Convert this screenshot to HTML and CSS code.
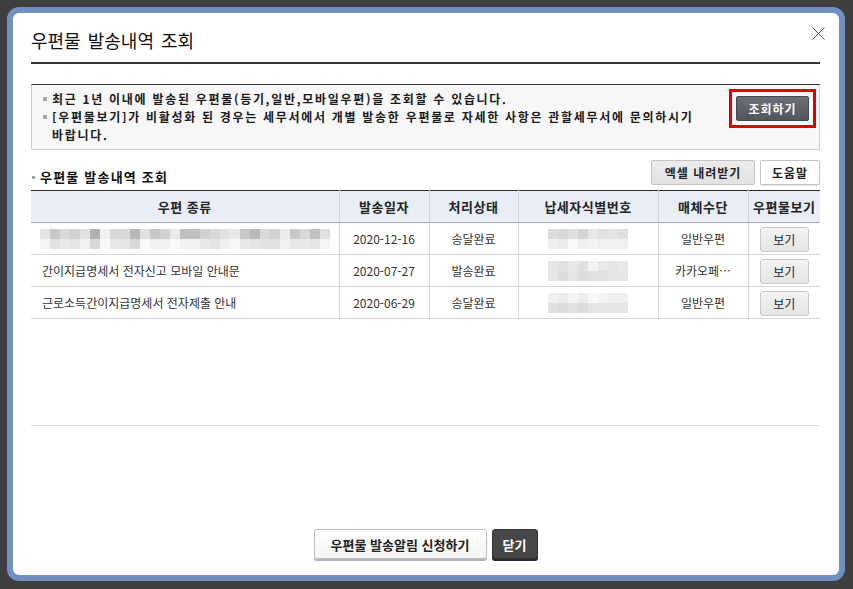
FILE: index.html
```html
<!DOCTYPE html>
<html lang="ko">
<head>
<meta charset="utf-8">
<title>우편물 발송내역 조회</title>
<link rel="stylesheet" href="styles.css">
</head>
<body>
<div class="backdrop">
  <div class="modal">
    <button class="close" aria-label="닫기">
      <svg width="13" height="13" viewBox="0 0 13 13"><path d="M0.5 0.5L12.5 12.5M12.5 0.5L0.5 12.5" stroke="#555" stroke-width="1" fill="none"/></svg>
    </button>
    <h1 class="title">우편물 발송내역 조회</h1>

    <div class="info">
      <ul class="info-list">
        <li>최근 1년 이내에 발송된 우편물(등기,일반,모바일우편)을 조회할 수 있습니다.</li>
        <li>[우편물보기]가 비활성화 된 경우는 세무서에서 개별 발송한 우편물로 자세한 사항은 관할세무서에 문의하시기<br>바랍니다.</li>
      </ul>
      <span class="search-mark"><button class="btn-search">조회하기</button></span>
    </div>

    <div class="toolbar">
      <h2 class="sub-title">우편물 발송내역 조회</h2>
      <div class="tools">
        <button class="btn-excel">엑셀 내려받기</button>
        <button class="btn-help">도움말</button>
      </div>
    </div>

    <div class="results">
      <table class="grid">
        <colgroup>
          <col class="c1"><col class="c2"><col class="c3"><col class="c4"><col class="c5"><col class="c6">
        </colgroup>
        <thead>
          <tr><th>우편 종류</th><th>발송일자</th><th>처리상태</th><th>납세자식별번호</th><th>매체수단</th><th>우편물보기</th></tr>
        </thead>
        <tbody>
          <tr>
            <td class="left">
              <svg class="mosaic" width="290" height="20" viewBox="0 0 290 20" shape-rendering="crispEdges">
                <rect x="0" y="0" width="10" height="10" fill="#e3e3e3"/><rect x="10" y="0" width="10" height="10" fill="#c8c8c8"/><rect x="20" y="0" width="10" height="10" fill="#d8d8d8"/><rect x="30" y="0" width="10" height="10" fill="#d0d0d0"/><rect x="40" y="0" width="10" height="10" fill="#e0e0e0"/><rect x="50" y="0" width="10" height="10" fill="#b0b0b0"/><rect x="60" y="0" width="10" height="10" fill="#f0f0f0"/><rect x="70" y="0" width="10" height="10" fill="#d8d8d8"/><rect x="80" y="0" width="10" height="10" fill="#d8d8d8"/><rect x="90" y="0" width="10" height="10" fill="#b8b8b8"/><rect x="100" y="0" width="10" height="10" fill="#e0e0e0"/><rect x="110" y="0" width="10" height="10" fill="#c8c8c8"/><rect x="120" y="0" width="10" height="10" fill="#d0d0d0"/><rect x="130" y="0" width="10" height="10" fill="#e8e8e8"/><rect x="140" y="0" width="10" height="10" fill="#c0c0c0"/><rect x="150" y="0" width="10" height="10" fill="#c0c0c0"/><rect x="160" y="0" width="10" height="10" fill="#d0d0d0"/><rect x="170" y="0" width="10" height="10" fill="#d8d8d8"/><rect x="180" y="0" width="10" height="10" fill="#e0e0e0"/><rect x="190" y="0" width="10" height="10" fill="#e8e8e8"/><rect x="200" y="0" width="10" height="10" fill="#c8c8c8"/><rect x="210" y="0" width="10" height="10" fill="#b8b8b8"/><rect x="220" y="0" width="10" height="10" fill="#d8d8d8"/><rect x="230" y="0" width="10" height="10" fill="#d0d0d0"/><rect x="240" y="0" width="10" height="10" fill="#ececec"/><rect x="250" y="0" width="10" height="10" fill="#c8c8c8"/><rect x="260" y="0" width="10" height="10" fill="#d8d8d8"/><rect x="270" y="0" width="10" height="10" fill="#c0c0c0"/><rect x="280" y="0" width="10" height="10" fill="#e0e0e0"/>
                <rect x="0" y="10" width="10" height="10" fill="#f4f4f4"/><rect x="10" y="10" width="10" height="10" fill="#e0e0e0"/><rect x="20" y="10" width="10" height="10" fill="#e8e8e8"/><rect x="30" y="10" width="10" height="10" fill="#e4e4e4"/><rect x="40" y="10" width="10" height="10" fill="#f0f0f0"/><rect x="50" y="10" width="10" height="10" fill="#d8d8d8"/><rect x="60" y="10" width="10" height="10" fill="#f8f8f8"/><rect x="70" y="10" width="10" height="10" fill="#e8e8e8"/><rect x="80" y="10" width="10" height="10" fill="#e4e4e4"/><rect x="90" y="10" width="10" height="10" fill="#d8d8d8"/><rect x="100" y="10" width="10" height="10" fill="#f8f8f8"/><rect x="110" y="10" width="10" height="10" fill="#f0f0f0"/><rect x="120" y="10" width="10" height="10" fill="#f0f0f0"/><rect x="130" y="10" width="10" height="10" fill="#f8f8f8"/><rect x="140" y="10" width="10" height="10" fill="#f0f0f0"/><rect x="150" y="10" width="10" height="10" fill="#f0f0f0"/><rect x="160" y="10" width="10" height="10" fill="#e8e8e8"/><rect x="170" y="10" width="10" height="10" fill="#e4e4e4"/><rect x="180" y="10" width="10" height="10" fill="#f0f0f0"/><rect x="190" y="10" width="10" height="10" fill="#f8f8f8"/><rect x="200" y="10" width="10" height="10" fill="#e8e8e8"/><rect x="210" y="10" width="10" height="10" fill="#e4e4e4"/><rect x="220" y="10" width="10" height="10" fill="#e0e0e0"/><rect x="230" y="10" width="10" height="10" fill="#e0e0e0"/><rect x="240" y="10" width="10" height="10" fill="#f0f0f0"/><rect x="250" y="10" width="10" height="10" fill="#e8e8e8"/><rect x="260" y="10" width="10" height="10" fill="#e8e8e8"/><rect x="270" y="10" width="10" height="10" fill="#e4e4e4"/><rect x="280" y="10" width="10" height="10" fill="#f4f4f4"/>
              </svg>
            </td>
            <td>2020-12-16</td>
            <td>송달완료</td>
            <td>
              <svg class="mosaic" width="80" height="20" viewBox="0 0 80 20" shape-rendering="crispEdges">
                <rect x="0" y="0" width="10" height="10" fill="#dcdcdc"/><rect x="10" y="0" width="10" height="10" fill="#d8d8d8"/><rect x="20" y="0" width="10" height="10" fill="#e0e0e0"/><rect x="30" y="0" width="10" height="10" fill="#d4d4d4"/><rect x="40" y="0" width="10" height="10" fill="#e8e8e8"/><rect x="50" y="0" width="10" height="10" fill="#e0e0e0"/><rect x="60" y="0" width="10" height="10" fill="#e4e4e4"/><rect x="70" y="0" width="10" height="10" fill="#e0e0e0"/>
                <rect x="0" y="10" width="10" height="10" fill="#f0f0f0"/><rect x="10" y="10" width="10" height="10" fill="#ececec"/><rect x="20" y="10" width="10" height="10" fill="#fafafa"/><rect x="30" y="10" width="10" height="10" fill="#f0f0f0"/><rect x="40" y="10" width="10" height="10" fill="#f4f4f4"/><rect x="50" y="10" width="10" height="10" fill="#f0f0f0"/><rect x="60" y="10" width="10" height="10" fill="#f0f0f0"/><rect x="70" y="10" width="10" height="10" fill="#f0f0f0"/>
              </svg>
            </td>
            <td>일반우편</td>
            <td><button class="btn-view">보기</button></td>
          </tr>
          <tr>
            <td class="left">간이지급명세서 전자신고 모바일 안내문</td>
            <td>2020-07-27</td>
            <td>발송완료</td>
            <td>
              <svg class="mosaic" width="80" height="20" viewBox="0 0 80 20" shape-rendering="crispEdges">
                <rect x="0" y="0" width="10" height="10" fill="#e4e4e4"/><rect x="10" y="0" width="10" height="10" fill="#e0e0e0"/><rect x="20" y="0" width="10" height="10" fill="#e8e8e8"/><rect x="30" y="0" width="10" height="10" fill="#e0e0e0"/><rect x="40" y="0" width="10" height="10" fill="#f4f4f4"/><rect x="50" y="0" width="10" height="10" fill="#e8e8e8"/><rect x="60" y="0" width="10" height="10" fill="#e4e4e4"/><rect x="70" y="0" width="10" height="10" fill="#e8e8e8"/>
                <rect x="0" y="10" width="10" height="10" fill="#e4e4e4"/><rect x="10" y="10" width="10" height="10" fill="#dcdcdc"/><rect x="20" y="10" width="10" height="10" fill="#e4e4e4"/><rect x="30" y="10" width="10" height="10" fill="#dcdcdc"/><rect x="40" y="10" width="10" height="10" fill="#e0e0e0"/><rect x="50" y="10" width="10" height="10" fill="#e0e0e0"/><rect x="60" y="10" width="10" height="10" fill="#e4e4e4"/><rect x="70" y="10" width="10" height="10" fill="#e4e4e4"/>
              </svg>
            </td>
            <td>카카오페…</td>
            <td><button class="btn-view">보기</button></td>
          </tr>
          <tr>
            <td class="left">근로소득간이지급명세서 전자제출 안내</td>
            <td>2020-06-29</td>
            <td>송달완료</td>
            <td>
              <svg class="mosaic" width="80" height="20" viewBox="0 0 80 20" shape-rendering="crispEdges">
                <rect x="0" y="0" width="10" height="10" fill="#f0f0f0"/><rect x="10" y="0" width="10" height="10" fill="#ececec"/><rect x="20" y="0" width="10" height="10" fill="#f4f4f4"/><rect x="30" y="0" width="10" height="10" fill="#ececec"/><rect x="40" y="0" width="10" height="10" fill="#f8f8f8"/><rect x="50" y="0" width="10" height="10" fill="#f4f4f4"/><rect x="60" y="0" width="10" height="10" fill="#f0f0f0"/><rect x="70" y="0" width="10" height="10" fill="#f0f0f0"/>
                <rect x="0" y="10" width="10" height="10" fill="#e0e0e0"/><rect x="10" y="10" width="10" height="10" fill="#dcdcdc"/><rect x="20" y="10" width="10" height="10" fill="#e0e0e0"/><rect x="30" y="10" width="10" height="10" fill="#dcdcdc"/><rect x="40" y="10" width="10" height="10" fill="#e4e4e4"/><rect x="50" y="10" width="10" height="10" fill="#e4e4e4"/><rect x="60" y="10" width="10" height="10" fill="#e4e4e4"/><rect x="70" y="10" width="10" height="10" fill="#e4e4e4"/>
              </svg>
            </td>
            <td>일반우편</td>
            <td><button class="btn-view">보기</button></td>
          </tr>
        </tbody>
      </table>
    </div>

    <div class="footer">
      <button class="btn-apply">우편물 발송알림 신청하기</button>
      <button class="btn-close">닫기</button>
    </div>
  </div>
</div>
</body>
</html>
```

FILE: styles.css
```css
* { box-sizing: border-box; }

html, body {
  margin: 0;
  padding: 0;
}

body {
  background: #3e3e3e;
  font-family: "Noto Sans CJK KR", "Noto Sans", "DejaVu Sans", sans-serif;
  color: #222;
  width: 853px;
  height: 589px;
  overflow: hidden;
}

.backdrop {
  padding: 7px 8px 0 7px;
}

.modal {
  position: relative;
  width: 838px;
  background: #fff;
  border: 6px solid #7091bf;
  border-radius: 12px;
  padding: 0 19px 16px 18px;
}

.close {
  position: absolute;
  top: 14px;
  right: 14px;
  width: 13px;
  height: 13px;
  padding: 0;
  border: 0;
  background: transparent;
  display: flex;
}

.title {
  margin: 0;
  padding: 15px 0 10px;
  font-size: 18px;
  line-height: 24px;
  font-weight: 400;
  color: #111;
  word-spacing: 2px;
  border-bottom: 2px solid #333;
}

/* info box */
.info {
  margin-top: 20px;
  display: flex;
  justify-content: space-between;
  align-items: flex-start;
  background: #f7f7f7;
  border: 1px solid #cfcfcf;
  border-top-color: #333;
  padding: 5px 3px 5px 0;
}

.info-list {
  margin: 0;
  padding: 0;
  list-style: none;
}

.info-list li {
  position: relative;
  padding-left: 20px;
  font-size: 12px;
  line-height: 18px;
  font-weight: 700;
  color: #1a1a1a;
  letter-spacing: 1.7px;
}

.info-list li::before {
  content: "";
  position: absolute;
  left: 11px;
  top: 7px;
  width: 4px;
  height: 4px;
  background: #a5a5a5;
}

.search-mark {
  display: flex;
  margin-top: -1px;
  border: 3px solid #e40000;
  padding: 4px;
}

.btn-search {
  width: 73px;
  height: 25px;
  border: 1px solid #44474d;
  border-radius: 2px;
  background: linear-gradient(#6b6f77, #50545b);
  color: #fff;
  font-family: inherit;
  font-size: 12px;
  font-weight: 700;
  letter-spacing: 1px;
  padding: 0;
}

/* toolbar */
.toolbar {
  margin-top: 10px;
  height: 25px;
  display: flex;
  justify-content: space-between;
  align-items: flex-end;
}

.sub-title {
  position: relative;
  margin: 0;
  padding-left: 9px;
  font-size: 13px;
  line-height: 16px;
  font-weight: 700;
  color: #111;
  letter-spacing: 1.2px;
}

.sub-title::before {
  content: "";
  position: absolute;
  left: 1px;
  top: 7px;
  width: 3px;
  height: 3px;
  background: #a5a5a5;
}

.tools {
  display: flex;
  gap: 5px;
  height: 25px;
}

.btn-excel,
.btn-help {
  height: 25px;
  padding: 0;
  border: 1px solid #c4c4c4;
  border-radius: 2px;
  font-family: inherit;
  font-size: 12px;
  font-weight: 700;
  color: #222;
  letter-spacing: 1px;
}

.btn-excel {
  width: 104px;
  background: linear-gradient(#ececec, #e2e2e2);
}

.btn-help {
  width: 60px;
  background: #fff;
  box-shadow: 0 1px 1px rgba(0, 0, 0, 0.12);
}

/* results */
.results {
  margin-top: 5px;
  height: 236px;
  border-bottom: 1px solid #dedede;
}

.grid {
  width: 789px;
  table-layout: fixed;
  border-collapse: collapse;
  border-top: 1px solid #2a2a2a;
}

.c1 { width: 308px; }
.c2 { width: 90px; }
.c3 { width: 89px; }
.c4 { width: 140px; }
.c5 { width: 90px; }
.c6 { width: 72px; }

.grid th {
  height: 32px;
  padding: 0;
  background: #e8edf6;
  border-bottom: 1px solid #a7adba;
  border-left: 1px solid #cfd4de;
  font-size: 13px;
  font-weight: 700;
  color: #222;
  letter-spacing: 0.5px;
  text-align: center;
  white-space: nowrap;
}

.grid td {
  height: 32px;
  padding: 0;
  border-bottom: 1px solid #d3d8df;
  border-left: 1px solid #d3d8df;
  font-size: 12px;
  color: #333;
  text-align: center;
  white-space: nowrap;
  vertical-align: middle;
}

.grid th:first-child,
.grid td:first-child {
  border-left: 0;
}

.grid td.left {
  text-align: left;
  padding-left: 11px;
}

.mosaic {
  display: block;
  margin: 0 auto;
}

.grid td.left .mosaic {
  margin: 0 0 0 -2px;
}

.btn-view {
  width: 49px;
  height: 25px;
  padding: 0;
  border: 1px solid #c9c9c9;
  border-radius: 3px;
  background: linear-gradient(#f3f3f3, #e5e5e5);
  font-family: inherit;
  font-size: 12px;
  color: #1b1b3a;
  margin-top: 2px;
}

/* footer */
.footer {
  margin-top: 103px;
  display: flex;
  justify-content: center;
  gap: 5px;
}

.btn-apply,
.btn-close {
  height: 30px;
  padding: 0;
  border-radius: 3px;
  font-family: inherit;
  font-size: 13px;
  font-weight: 700;
}

.btn-apply {
  width: 173px;
  background: linear-gradient(#ffffff, #f3f3f3);
  border: 1px solid #bdbdbd;
  box-shadow: 0 2px 0 #b5b5b5;
  color: #222;
}

.btn-close {
  width: 46px;
  background: #474747;
  border: 1px solid #333;
  box-shadow: 0 2px 0 #2a2a2a;
  color: #fff;
}
```
